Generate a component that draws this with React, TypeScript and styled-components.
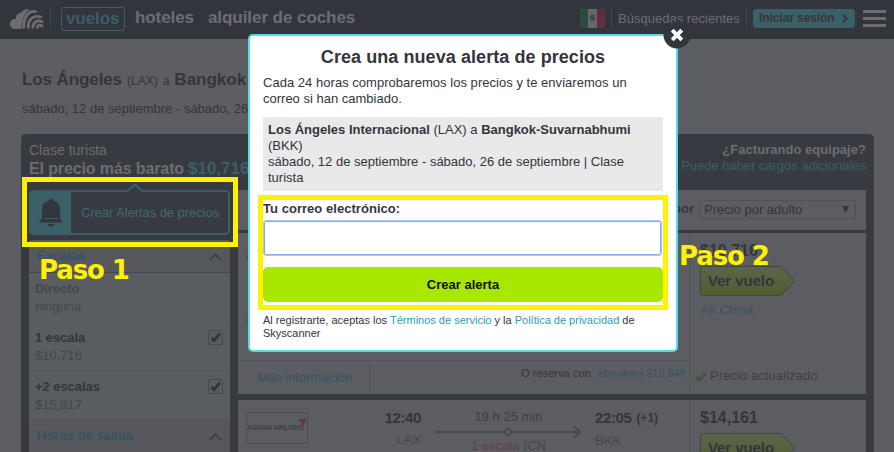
import React from "react";
import styled, { createGlobalStyle, css } from "styled-components";

const c = {
  header: "#33353d",
  page: "#5d5e63",
  panel: "#383a41",
  card: "#5c5d62",
  side: "#595c60",
  sideHead: "#57585d",
  ink: "#33353d",
  soft: "#3d3f46",
  grey: "#46474c",
  light: "#6c6d72",
  teal: "#3b5f67",
  link: "#365460",
  line: "#535459",
  yellow: "#fff200",
  cyan: "#55dceb",
};

const GlobalStyle = createGlobalStyle`
  * { box-sizing: border-box; }
  html, body { margin: 0; padding: 0; overflow: hidden; }
  body { background: ${c.page}; color: ${c.ink}; font: 13px/16px "Liberation Sans", Arial, sans-serif; }
`;

const Text = styled.span<{ $size?: number; $bold?: boolean; $color?: string; $ls?: number; $lh?: number }>`
  display: block;
  white-space: nowrap;
  font-size: ${(p) => p.$size ?? 13}px;
  line-height: ${(p) => p.$lh ?? 16}px;
  font-weight: ${(p) => (p.$bold ? 700 : 400)};
  color: ${(p) => p.$color ?? c.ink};
  letter-spacing: ${(p) => p.$ls ?? 0}px;
`;

const Screen = styled.div`
  position: relative;
  width: 894px;
  height: 452px;
  overflow: hidden;
  background: ${c.page};
`;

/* ---------- top bar ---------- */
const Header = styled.header`
  display: flex;
  align-items: flex-start;
  height: 39px;
  padding: 7px 8px 0 9px;
  background: ${c.header};
`;
const Logo = styled.svg`
  width: 35px;
  height: 22px;
  margin: 1px 6px 0 0;
`;
const Rule = styled.i`
  width: 1px;
  height: 20px;
  margin-top: 1px;
  background: #45474d;
`;
const ActiveTab = styled.div`
  width: 64px;
  height: 24px;
  margin: 0 10px;
  padding: 1px 0 0 4px;
  border: 1px solid ${c.teal};
  border-radius: 3px;
`;
const Nav = styled.nav`
  display: flex;
  gap: 14px;
`;
const Tools = styled.div`
  display: flex;
  flex: 1;
  justify-content: flex-end;
`;
const Flag = styled.svg`
  width: 25px;
  height: 19px;
  margin: 2px 6px 0 0;
`;
const Recent = styled.div`
  width: 134px;
  padding: 4px 0 0 6px;
`;
const SignIn = styled.div`
  display: flex;
  align-items: center;
  width: 102px;
  height: 19px;
  margin: 2px 8px 0 6px;
  padding: 0 6px 1px;
  gap: 7px;
  border-radius: 4px;
  background: #3b6067;
`;
const Burger = styled.div`
  display: flex;
  flex-direction: column;
  gap: 4px;
  width: 23px;
  margin-top: 3px;
  i { height: 3px; background: ${c.light}; }
`;

/* ---------- route summary ---------- */
const Summary = styled.section`
  height: 95px;
  padding: 31px 0 0 22px;
`;
const Route = styled.div`
  display: flex;
  align-items: baseline;
  gap: 5px;
  height: 31px;
`;

/* ---------- results panel ---------- */
const Panel = styled.main`
  width: 853px;
  height: 318px;
  margin-left: 21px;
  padding: 8px 8px 0;
  border-radius: 5px 5px 0 0;
  background: ${c.panel};
`;
const PanelHead = styled.div`
  display: flex;
  justify-content: space-between;
  height: 48px;
`;
const Cheapest = styled.div`
  display: flex;
  gap: 4px;
`;
const Baggage = styled.div`
  display: flex;
  flex-direction: column;
  align-items: flex-end;
`;
const Columns = styled.div`
  display: grid;
  grid-template-columns: 201px 628px;
  column-gap: 8px;
`;

/* ---------- filters ---------- */
const AlertBox = styled.div`
  position: relative;
  display: flex;
  height: 45px;
  border: 2px solid ${c.teal};
  border-radius: 5px;
`;
const Notch = styled.svg`
  position: absolute;
  left: 94px;
  top: -9px;
  width: 20px;
  height: 10px;
`;
const BellCell = styled.div`
  width: 40px;
  background: ${c.teal};
  svg { display: block; width: 26px; height: 30px; margin: 5px 0 0 7px; }
`;
const AlertLabel = styled.div`
  padding: 13px 0 0 10px;
`;
const Filters = styled.aside`
  height: 212px;
  margin-top: 5px;
  border-radius: 3px 3px 0 0;
  background: ${c.side};
  overflow: hidden;
`;
const FilterHead = styled.div<{ $first?: boolean }>`
  display: flex;
  justify-content: space-between;
  height: ${(p) => (p.$first ? 33 : 32)}px;
  padding: 7px 8px 0 8px;
  background: ${c.sideHead};
  ${(p) => p.$first && css`border-bottom: 1px solid #43464b;`}
  svg { width: 13px; height: 8px; margin-top: 6px; }
`;
const FilterRow = styled.div`
  display: flex;
  justify-content: space-between;
  height: 49px;
  padding: 7px 7px 0 6px;
  border-bottom: 1px solid #56585d;
`;
const Tick = styled.div`
  width: 15px;
  height: 15px;
  margin-top: 1px;
  border: 1px solid #46484d;
  border-radius: 2px;
  svg { display: block; width: 13px; height: 13px; }
`;

/* ---------- results ---------- */
const SortBar = styled.div`
  display: flex;
  justify-content: flex-end;
  gap: 5px;
  height: 40px;
  margin-bottom: 3px;
  padding: 10px 10px 0 0;
  background: ${c.card};
`;
const SortSelect = styled.div`
  display: flex;
  justify-content: space-between;
  align-items: flex-start;
  width: 157px;
  height: 19px;
  padding: 0 6px 0 4px;
  border: 1px solid #505156;
  svg { width: 7px; height: 7px; margin-top: 5px; }
`;
const Card = styled.article<{ $h: number }>`
  display: grid;
  grid-template-columns: 452px 176px;
  height: ${(p) => p.$h}px;
  margin-bottom: 6px;
  background: ${c.card};
  overflow: hidden;
`;
const Flights = styled.div`
  display: flex;
  flex-direction: column;
  border-right: 1px solid ${c.line};
`;
const Legs = styled.div`
  display: flex;
  flex-direction: column;
  gap: 47px;
  height: 127px;
  padding: 14px 0 0 8px;
`;
const CardFoot = styled.div`
  display: flex;
  height: 34px;
  border-top: 1px solid ${c.line};
`;
const MoreInfo = styled.div`
  width: 132px;
  height: 26px;
  margin-top: 4px;
  padding: 4px 0 0 19px;
  border-right: 1px solid ${c.line};
`;
const Booking = styled.div`
  display: flex;
  flex: 1;
  justify-content: flex-end;
  gap: 4px;
  padding: 4px 3px 0 0;
`;
const Price = styled.div`
  display: flex;
  flex-direction: column;
  padding: 8px 0 0 10px;
`;
const Tag = styled.div`
  display: grid;
  width: 96px;
  height: 30px;
  margin: 5px 0 6px;
  > * { grid-area: 1 / 1; }
  > span { padding: 5px 0 0 8px; }
`;
const Updated = styled.div`
  display: flex;
  gap: 3px;
  margin: 50px 0 0 -5px;
  svg { width: 12px; height: 10px; margin-top: 4px; }
`;
const Trip = styled.div`
  display: flex;
  padding: 9px 0 0 8px;
`;
const Airline = styled.div`
  display: flex;
  align-items: center;
  width: 62px;
  height: 32px;
  margin-top: 3px;
  border: 1px solid #4c4d52;
  svg { flex: none; width: 8px; height: 9px; margin: -11px 0 0 -5px; }
`;
const Depart = styled.div`
  display: flex;
  flex-direction: column;
  align-items: flex-end;
  gap: 5px;
  width: 113px;
`;
const Duration = styled.div`
  display: flex;
  flex-direction: column;
  align-items: center;
  width: 147px;
  margin-left: 14px;
  svg { display: block; width: 147px; height: 12px; margin: 1px 0 0; }
`;
const Stops = styled.div`
  display: flex;
  gap: 4px;
`;
const Arrive = styled.div`
  display: flex;
  flex-direction: column;
  gap: 6px;
  margin-left: 13px;
`;
const Clock = styled.div`
  display: flex;
  gap: 5px;
`;

/* ---------- dialog ---------- */
const Dialog = styled.div`
  position: absolute;
  left: 248px;
  top: 34px;
  width: 430px;
  height: 318px;
  padding: 11px 13px 0;
  border: 2px solid ${c.cyan};
  border-radius: 5px;
  background: #fff;
`;
const Title = styled.h2`
  margin: 0 0 8px;
  text-align: center;
  font-size: 18px;
  line-height: 20px;
  letter-spacing: 0.07px;
`;
const Itinerary = styled.div`
  height: 74px;
  margin: 10px 0 9px;
  padding: 5px;
  background: #e9e9e9;
`;
const EmailInput = styled.input`
  display: block;
  width: 399px;
  height: 36px;
  margin: 3px 0 11px;
  padding: 4px;
  border: 1px solid #a9c7fa;
  border-radius: 3px;
  outline: 0;
  box-shadow: inset 0 0 0 1px #86aae6;
`;
const CreateButton = styled.button`
  display: block;
  width: 400px;
  height: 35px;
  margin-bottom: 12px;
  padding: 0;
  border: 0;
  border-radius: 5px;
  background: #a8e800;
  color: #111;
  font: 700 13px/35px "Liberation Sans", Arial, sans-serif;
`;
const Terms = styled.p`
  margin: 0;
  font-size: 11px;
  line-height: 13px;
  white-space: nowrap;
  a { color: #2c9cb8; }
`;
const Close = styled.svg`
  position: absolute;
  left: 663px;
  top: 21px;
  width: 28px;
  height: 28px;
`;

/* ---------- annotations ---------- */
const Highlight = styled.div<{ $x: number; $y: number; $w: number; $h: number }>`
  position: absolute;
  left: ${(p) => p.$x}px;
  top: ${(p) => p.$y}px;
  width: ${(p) => p.$w}px;
  height: ${(p) => p.$h}px;
  border: 5px solid ${c.yellow};
  pointer-events: none;
`;
const Step = styled.div<{ $x: number; $y: number }>`
  position: absolute;
  left: ${(p) => p.$x}px;
  top: ${(p) => p.$y}px;
  color: ${c.yellow};
  font: 700 26px/30px "DejaVu Sans", sans-serif;
  letter-spacing: -1.1px;
  white-space: nowrap;
`;

const Chevron = () => (
  <svg viewBox="0 0 13 8"><path d="M1 7 6.5 1.5 12 7" fill="none" stroke={c.soft} strokeWidth="1.7" /></svg>
);

const Checkbox = () => (
  <Tick>
    <svg viewBox="0 0 13 13"><path d="M2.5 7 5 9.7 10.8 2.5" fill="none" stroke={c.ink} strokeWidth="2.8" /></svg>
  </Tick>
);

const VerVuelo = ({ id }: { id: string }) => (
  <Tag>
    <svg width="96" height="30" viewBox="0 0 96 30">
      <defs>
        <linearGradient id={id} x1="0" y1="0" x2="0" y2="1">
          <stop offset="0" stopColor="#5b654a" />
          <stop offset="1" stopColor="#4f5e30" />
        </linearGradient>
      </defs>
      <path d="M3.5.5H81L94.5 15 81 29.5H3.5a3 3 0 0 1-3-3v-23a3 3 0 0 1 3-3Z" fill={`url(#${id})`} stroke="#3f4447" />
    </svg>
    <Text $size={15} $bold $ls={-0.08} $lh={20}>Ver vuelo</Text>
  </Tag>
);

const Filter = ({ name, value, off }: { name: string; value: string; off?: boolean }) => (
  <FilterRow>
    <div>
      <Text $bold $ls={-0.06} $lh={18} $color={off ? c.grey : c.ink}>{name}</Text>
      <Text $lh={18} $color={c.grey}>{value}</Text>
    </div>
    {!off && <Checkbox />}
  </FilterRow>
);

export default function App() {
  return (
    <Screen>
      <GlobalStyle />
      <Header>
        <Logo viewBox="0 0 35 22">
          <path d="M5.2 21A5 5 0 1 1 6.6 11 6.5 6.5 0 0 1 12 4.8 8.5 8.5 0 0 1 20.5 1.2C15.5 5 12.5 12 12.8 20.5Q11 21 5.2 21Z" fill={c.light} />
          <g fill="none" stroke={c.light} strokeWidth="2.9" strokeLinecap="round">
            <path d="M14.7 19.3C14.5 9 20 2 26.5 3.6" />
            <path d="M19.2 19.3C19 12 24 6.5 31.5 9" />
            <path d="M23.8 19.3C24.2 14 28 11.5 33 13.6" />
            <path d="M28.4 19.3C29 17 31 16.5 33 18" />
          </g>
        </Logo>
        <Rule />
        <ActiveTab><Text $size={17} $bold $color={c.teal} $lh={20} $ls={-0.08}>vuelos</Text></ActiveTab>
        <Nav>
          <Text $size={17} $bold $color={c.light} $lh={21} $ls={-0.08}>hoteles</Text>
          <Text $size={17} $bold $color={c.light} $lh={21} $ls={-0.06}>alquiler de coches</Text>
        </Nav>
        <Tools>
          <Flag viewBox="0 0 25 19">
            <path d="M0 0h8v19H0z" fill="#2d4b3d" />
            <path d="M8 0h9v19H8z" fill="#67686d" />
            <path d="M17 0h8v19h-8z" fill="#5c313b" />
            <path d="M10 7Q12 4 14.5 6.5L15 10Q13 14 10 11Z" fill="#4d4744" />
            <path d="M9.5 9Q12.5 15 15.5 9" fill="none" stroke="#43534a" />
          </Flag>
          <Rule />
          <Recent><Text $color={c.light} $ls={0.02}>Búsquedas recientes</Text></Recent>
          <Rule />
          <SignIn>
            <Text $size={12} $bold $ls={-0.08}>Iniciar sesión</Text>
            <svg width="6" height="9" viewBox="0 0 6 9"><path d="m1 .8 3.7 3.7L1 8.2" fill="none" stroke={c.ink} strokeWidth="1.8" /></svg>
          </SignIn>
          <Burger><i /><i /><i /></Burger>
        </Tools>
      </Header>

      <Summary>
        <Route>
          <Text $size={17} $bold $ls={-0.1} $lh={20}>Los Ángeles</Text>
          <Text $size={12}>(LAX)</Text>
          <Text $size={12}>a</Text>
          <Text $size={17} $bold $lh={20}>Bangkok</Text>
        </Route>
        <Text>sábado, 12 de septiembre - sábado, 26 de septiembre</Text>
      </Summary>

      <Panel>
        <PanelHead>
          <div>
            <Text $size={14} $color={c.light} $lh={17}>Clase turista</Text>
            <Cheapest>
              <Text $size={16} $bold $color={c.light} $ls={-0.12} $lh={20}>El precio más barato</Text>
              <Text $size={17} $bold $color={c.teal} $lh={20}>$10,716</Text>
            </Cheapest>
          </div>
          <Baggage>
            <Text $bold $color={c.light} $ls={0.03} $lh={16}>¿Facturando equipaje?</Text>
            <Text $color={c.teal} $ls={-0.03} $lh={16}>Puede haber cargos adicionales</Text>
          </Baggage>
        </PanelHead>
        <Columns>
          <div>
            <AlertBox>
              <Notch viewBox="0 0 20 10"><path d="M2 10 10 2l8 8Z" fill={c.panel} /><path d="M1.5 9 10 1.5 18.5 9" fill="none" stroke={c.teal} strokeWidth="2" /></Notch>
              <BellCell>
                <svg viewBox="0 0 26 30">
                  <path d="M11 3.5a2 2 0 0 1 4 0C20 4.5 22 8 22 13v8l2.8 4.5H1.2L4 21v-8C4 8 6 4.5 11 3.5Z" fill={c.ink} />
                  <path d="M9 27h8l-4 3Z" fill={c.ink} />
                  <path d="M6 21.5h14" stroke={c.teal} />
                </svg>
              </BellCell>
              <AlertLabel><Text $color="#3f6972" $ls={-0.06}>Crear Alertas de precios</Text></AlertLabel>
            </AlertBox>
            <Filters>
              <FilterHead $first><Text $bold $color={c.link} $lh={17}>Escalas</Text><Chevron /></FilterHead>
              <Filter name="Directo" value="ninguna" off />
              <Filter name="1 escala" value="$10,716" />
              <Filter name="+2 escalas" value="$15,817" />
              <FilterHead><Text $bold $color={c.link} $lh={17}>Horas de salida</Text><Chevron /></FilterHead>
            </Filters>
          </div>
          <div>
            <SortBar>
              <Text $bold $lh={18}>por</Text>
              <SortSelect>
                <Text $lh={17}>Precio por adulto</Text>
                <svg viewBox="0 0 7 7"><path d="M0 0h7L3.5 7Z" fill={c.ink} /></svg>
              </SortSelect>
            </SortBar>
            <Card $h={161}>
              <Flights>
                <Legs><Text $size={11} $color={c.grey}>A</Text><Text $size={11} $color={c.grey}>A</Text></Legs>
                <CardFoot>
                  <MoreInfo><Text $color={c.link} $ls={-0.03} $lh={17}>Más información</Text></MoreInfo>
                  <Booking>
                    <Text $size={11} $ls={0.06}>O reserva con:</Text>
                    <Text $size={11} $color={c.link}>ebookers $19,646</Text>
                  </Booking>
                </CardFoot>
              </Flights>
              <Price>
                <Text $size={16} $bold $lh={20}>$10,716</Text>
                <VerVuelo id="tagA" />
                <Text $color={c.link}>Air China</Text>
                <Updated>
                  <svg viewBox="0 0 12 10"><path d="M1 5 4.2 8 11 1" fill="none" stroke="#435238" strokeWidth="2.5" /></svg>
                  <Text $color={c.soft} $ls={0.07}>Precio actualizado</Text>
                </Updated>
              </Price>
            </Card>
            <Card $h={52}>
              <Flights>
                <Trip>
                  <Airline>
                    <Text $size={7} $bold $color="#414248" $ls={-0.3} $lh={10}>ASIANA AIRLINES</Text>
                    <svg viewBox="0 0 10 10"><path d="M1 2 9 1 6 9M9 1 4 5" fill="none" stroke="#67313b" strokeWidth="2" /></svg>
                  </Airline>
                  <Depart>
                    <Text $size={15} $bold $ls={-0.4} $lh={18}>12:40</Text>
                    <Text $color={c.grey}>LAX</Text>
                  </Depart>
                  <Duration>
                    <Text $color={c.soft}>19 h 25 min</Text>
                    <svg viewBox="0 0 147 12" fill="none" stroke="#484a4f" strokeWidth="2"><path d="M0 6h69M77 6h68M139 .5 145.5 6 139 11.5" /><circle cx="73" cy="6" r="3.3" /></svg>
                    <Stops><Text $color="#653f46">1 escala</Text><Text $color={c.grey}>ICN</Text></Stops>
                  </Duration>
                  <Arrive>
                    <Clock><Text $size={15} $bold $ls={-0.4} $lh={18}>22:05</Text><Text $size={12} $bold $lh={18}>(+1)</Text></Clock>
                    <Text $color={c.grey}>BKK</Text>
                  </Arrive>
                </Trip>
              </Flights>
              <Price>
                <Text $size={16} $bold $lh={20}>$14,161</Text>
                <VerVuelo id="tagB" />
              </Price>
            </Card>
          </div>
        </Columns>
      </Panel>

      <Step $x={39} $y={255}>Paso 1</Step>
      <Step $x={679} $y={241}>Paso 2</Step>

      <Dialog role="dialog">
        <Title>Crea una nueva alerta de precios</Title>
        <Text $ls={0.03}>Cada 24 horas comprobaremos los precios y te enviaremos un</Text>
        <Text>correo si han cambiado.</Text>
        <Itinerary>
          <Text><b>Los Ángeles Internacional</b> (LAX) a <b>Bangkok-Suvarnabhumi</b></Text>
          <Text>(BKK)</Text>
          <Text>sábado, 12 de septiembre - sábado, 26 de septiembre | Clase</Text>
          <Text>turista</Text>
        </Itinerary>
        <Text as="label" $bold $ls={0.04} $lh={17}>Tu correo electrónico:</Text>
        <EmailInput type="email" />
        <CreateButton type="button">Crear alerta</CreateButton>
        <Terms>
          Al registrarte, aceptas los <a>Términos de servicio</a> y la <a>Política de privacidad</a> de<br />Skyscanner
        </Terms>
      </Dialog>
      <Close viewBox="0 0 28 28">
        <circle cx="14" cy="14" r="13.5" fill={c.header} />
        <path d="m9.2 9.2 9.6 9.6m0-9.6-9.6 9.6" stroke="#fff" strokeWidth="4" />
      </Close>

      <Highlight $x={22} $y={177} $w={216} $h={70} />
      <Highlight $x={258} $y={195} $w={410} $h={115} />
    </Screen>
  );
}
